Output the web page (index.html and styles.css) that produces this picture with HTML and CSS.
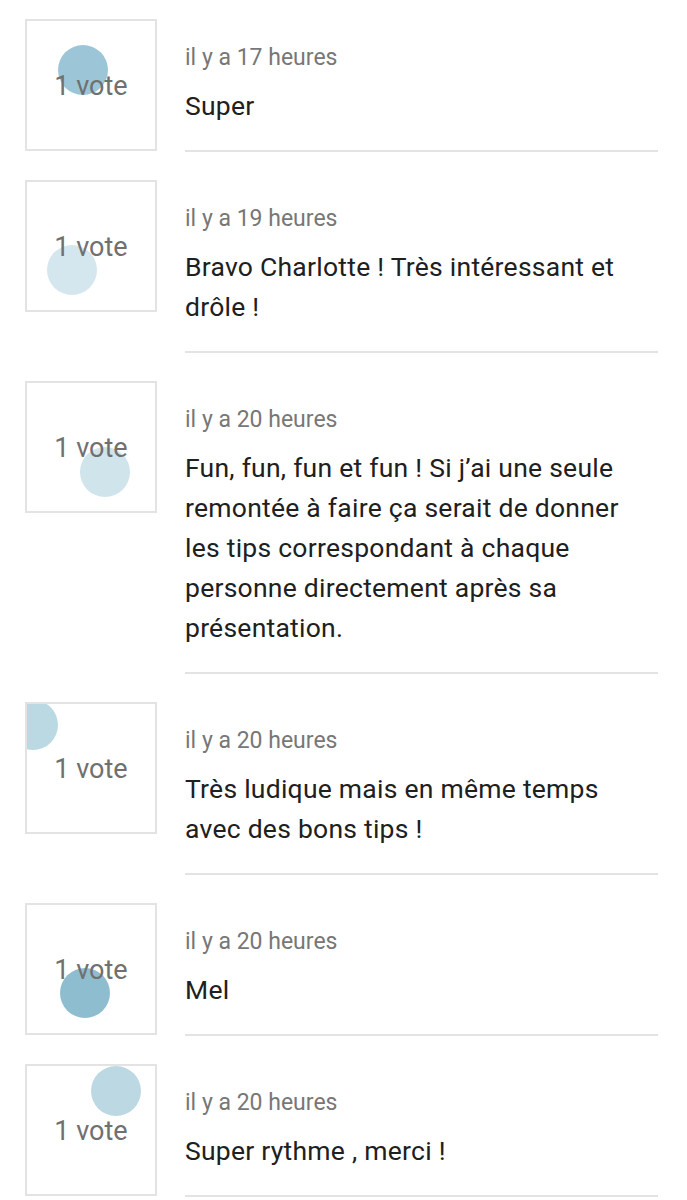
FILE: index.html
```html
<!DOCTYPE html>
<html lang="fr">
<head>
<meta charset="utf-8">
<link rel="stylesheet" href="styles.css">
</head>
<body>
<ul class="list">
  <li class="item">
    <div class="votes"><span class="ripple" style="left:31px;top:24px;background:#9cc6d7"></span><span class="count">1 vote</span></div>
    <div class="body"><div class="time">il y a 17 heures</div><p class="text">Super</p></div>
  </li>
  <li class="item">
    <div class="votes"><span class="ripple" style="left:20px;top:63px;background:#d5e7ee"></span><span class="count">1 vote</span></div>
    <div class="body"><div class="time">il y a 19 heures</div><p class="text">Bravo Charlotte ! Très intéressant et drôle !</p></div>
  </li>
  <li class="item">
    <div class="votes"><span class="ripple" style="left:53px;top:64px;background:#cfe4eb"></span><span class="count">1 vote</span></div>
    <div class="body"><div class="time">il y a 20 heures</div><p class="text">Fun, fun, fun et fun ! Si j’ai une seule remontée à faire ça serait de donner les tips correspondant à chaque personne directement après sa présentation.</p></div>
  </li>
  <li class="item">
    <div class="votes"><span class="ripple" style="left:-19px;top:-4px;background:#bad9e3"></span><span class="count">1 vote</span></div>
    <div class="body"><div class="time">il y a 20 heures</div><p class="text">Très ludique mais en même temps avec des bons tips !</p></div>
  </li>
  <li class="item">
    <div class="votes"><span class="ripple" style="left:33px;top:63px;background:#8ebdd0"></span><span class="count">1 vote</span></div>
    <div class="body"><div class="time">il y a 20 heures</div><p class="text">Mel</p></div>
  </li>
  <li class="item">
    <div class="votes"><span class="ripple" style="left:64px;top:0px;background:#bcd9e3"></span><span class="count">1 vote</span></div>
    <div class="body"><div class="time">il y a 20 heures</div><p class="text">Super rythme , merci !</p></div>
  </li>
</ul>
</body>
</html>
```
FILE: styles.css
```css
html, body {
  margin: 0;
  padding: 0;
  background: #ffffff;
}
body {
  font-family: Roboto, "Noto Sans", "Liberation Sans", sans-serif;
}
.list {
  list-style: none;
  margin: 0;
  padding: 19px 29px 0 25px;
  display: flex;
  flex-direction: column;
  gap: 28px;
}
.item {
  display: flex;
  gap: 28px;
  align-items: flex-start;
}
.votes {
  position: relative;
  flex: none;
  width: 128px;
  height: 128px;
  border: 2px solid #e3e3e3;
  overflow: hidden;
  display: flex;
  align-items: center;
  justify-content: center;
}
.ripple {
  position: absolute;
  width: 50px;
  height: 50px;
  border-radius: 50%;
}
.count {
  position: relative;
  font-size: 27px;
  line-height: 32px;
  color: #707070;
  padding-top: 2px;
}
.body {
  flex: 1;
  min-width: 0;
  padding-top: 22px;
  padding-bottom: 24px;
  border-bottom: 2px solid #e3e3e3;
}
.time {
  font-size: 23px;
  line-height: 34px;
  color: #777777;
}
.text {
  margin: 11px 0 0;
  padding-right: 6px;
  font-size: 26.5px;
  letter-spacing: 0.25px;
  line-height: 40px;
  color: #202020;
}
```
